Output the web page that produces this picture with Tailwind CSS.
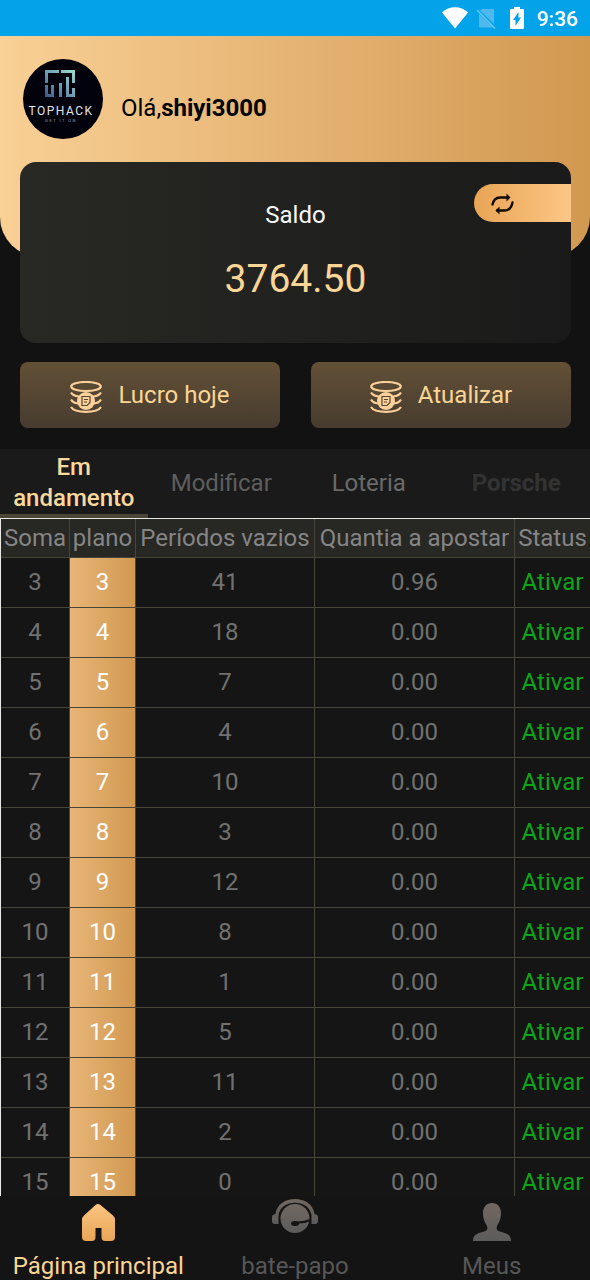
<!DOCTYPE html>
<html lang="pt">
<head>
<meta charset="utf-8">
<meta name="viewport" content="width=device-width, initial-scale=1">
<title>Página principal</title>
<script src="https://cdn.jsdelivr.net/npm/@tailwindcss/browser@4"></script>
</head>
<body class="flex h-screen flex-col overflow-hidden bg-[#121212] font-[Roboto,sans-serif] text-2xl text-[#717171]">

<!-- Status bar -->
<div class="flex h-9 shrink-0 items-center justify-end bg-[#03a3ea] pt-px pr-3 text-[21px] font-medium text-white">
  <svg class="mr-1.5 h-6 w-7" viewBox="0 0 28 24" fill="#fff"><path d="M1 5.500C8-1.500 20-1.500 27 5.500L14 21.500z"/></svg>
  <svg class="mr-1.5 h-6 w-6" viewBox="0 0 24 24" fill="#4fb9ee"><path d="M7.500 2H18q1 0 1 1v14L5 3.500zM4 7l14 13.500H5q-1 0-1-1z"/><path d="M2 3 20 21.500" stroke="#6cc6f0" stroke-width="1.500"/></svg>
  <svg class="mr-2 h-6 w-6" viewBox="0 0 24 24"><path d="M9 0h6v2h3q1 0 1 1v18q0 1-1 1H6q-1 0-1-1V3q0-1 1-1h3z" fill="#fff"/><path d="M13.500 5v5.500H16L10.500 19v-6H8z" fill="#03a3ea"/></svg>
  <span>9:36</span>
</div>

<!-- Greeting -->
<header class="h-[221px] shrink-0 rounded-b-[40px] bg-linear-to-r from-[#f9d095] to-[#d19850] px-[22px] pt-[22px] text-black">
  <div class="flex items-center gap-[18px]">
    <svg class="size-[81px]" viewBox="0 0 81 81" role="img" aria-label="Tophack">
      <defs><linearGradient id="logo" x1="0" y1="1" x2="1" y2="0"><stop offset="0" stop-color="#3c5488"/><stop offset=".5" stop-color="#6f9fb4"/><stop offset="1" stop-color="#9be0cc"/></linearGradient></defs>
      <circle cx="41" cy="41" r="40" fill="#02020c"/>
      <path d="M23 25V12h14v3H26v10zM39 12h14v13h-3V15H39zM23 27h3v9h3v-9h3v12h-9zM37 25h3v14h-3zM44 19h3v17h3v-6h3v9h-9z" fill="url(#logo)"/>
      <text x="39" y="57" text-anchor="middle" font-family="Roboto,sans-serif" font-size="12" letter-spacing="1.500" fill="#e2e2ea">TOPHACK</text>
      <text x="39" y="64" text-anchor="middle" font-family="Roboto,sans-serif" font-size="4" letter-spacing="1.500" fill="#9a9aa4">GET IT ON</text>
    </svg>
    <p class="pt-[18px]">Olá,<b class="font-bold">shiyi3000</b></p>
  </div>
</header>

<!-- Balance -->
<section class="relative mr-[19px] ml-5 -mt-[95px] h-[181px] shrink-0 rounded-2xl bg-linear-to-r from-[#282824] to-[#1a1a1a] pt-[37px] text-center">
  <h2 class="leading-8 text-[#f8f8f8]">Saldo</h2>
  <p class="mt-6 text-[39px] leading-12 text-[#fbd595]">3764.50</p>
  <button type="button" aria-label="Trocar" class="absolute top-[22px] right-0 flex h-[38px] w-[97px] items-center rounded-l-full bg-linear-to-r from-[#e9a455] to-[#fcc785] pt-0.5 pl-4">
    <svg class="size-6" viewBox="0 0 24 24" fill="none" stroke="#120b04" stroke-width="2.300"><path d="M2.500 12.500C3.500 8 6 5.500 10 5.500h8M22.500 10.500c-1 5.500-4 8-8 8H7" stroke-linecap="round"/><path d="M16.500 1.500l4 4-4 4zM9.500 14.500l-4 4 4 4z" fill="#120b04" stroke="none"/></svg>
  </button>
</section>

<div class="mt-[19px] mr-[19px] mb-[21px] ml-5 grid shrink-0 grid-cols-2 gap-[31px] text-[#fbd595]">
  <button type="button" class="flex h-[66px] items-center justify-center gap-4 rounded-lg bg-linear-to-b from-[#635036] to-[#473c2f]">
    <svg class="mt-1 size-8" viewBox="0 0 32 32" fill="none" stroke="#fbd09a" stroke-width="2.200"><ellipse cx="16" cy="5.500" rx="14.800" ry="4.500"/><path d="M1 11.500q2 3.500 8 4M31 11.500q-2 3.500-8 4M1 18.500q2 3.500 7 4M31 18.500q-2 3.500-7 4M1 26C5 32.500 27 32.500 31 26"/><circle cx="16" cy="20" r="9" fill="#fbd09a" stroke="none"/><path d="M12 15.500h8v6l-3 3h-5zM14 18.500h4M14 21h3" stroke="#54452f" stroke-width="1.200"/></svg>
    <span>Lucro hoje</span>
  </button>
  <button type="button" class="flex h-[66px] items-center justify-center gap-4 rounded-lg bg-linear-to-b from-[#635036] to-[#473c2f]">
    <svg class="mt-1 size-8" viewBox="0 0 32 32" fill="none" stroke="#fbd09a" stroke-width="2.200"><ellipse cx="16" cy="5.500" rx="14.800" ry="4.500"/><path d="M1 11.500q2 3.500 8 4M31 11.500q-2 3.500-8 4M1 18.500q2 3.500 7 4M31 18.500q-2 3.500-7 4M1 26C5 32.500 27 32.500 31 26"/><circle cx="16" cy="20" r="9" fill="#fbd09a" stroke="none"/><path d="M12 15.500h8v6l-3 3h-5zM14 18.500h4M14 21h3" stroke="#54452f" stroke-width="1.200"/></svg>
    <span>Atualizar</span>
  </button>
</div>

<!-- Tabs -->
<div role="tablist" class="grid shrink-0 grid-cols-4 bg-[#1a1a1a] leading-[31px]">
  <button type="button" role="tab" aria-selected="true" class="border-b-4 border-[#4b4536] pt-[3px] font-medium text-[#fbd99c]">Em andamento</button>
  <button type="button" role="tab" class="border-b-4 border-transparent pt-[3px] text-[#5e5e5e]">Modificar</button>
  <button type="button" role="tab" class="border-b-4 border-transparent pt-[3px] text-[#6a6a6a]">Loteria</button>
  <button type="button" role="tab" class="border-b-4 border-transparent pt-[3px] font-bold text-[#333]">Porsche</button>
</div>

<!-- Plan table -->
<main class="min-h-0 flex-1 overflow-hidden bg-[#151515]">
  <table class="w-full border-separate border-spacing-0 border-t border-l border-[#e8e8e8] text-center whitespace-nowrap">
    <thead>
      <tr class="h-[39px] bg-[#272724] text-[#858585] *:border-r *:border-b *:border-[#48453a] *:px-[2px] *:font-normal *:last:border-r-0">
        <th scope="col" class="w-[69px]">Soma</th><th scope="col" class="w-[66px]">plano</th><th scope="col" class="w-[179px]">Períodos vazios</th><th scope="col" class="w-[200px]">Quantia a apostar</th><th scope="col">Status</th>
      </tr>
    </thead>
    <tbody id="rows"></tbody>
  </table>
</main>

<!-- Bottom navigation -->
<nav class="grid h-[84px] shrink-0 grid-cols-3 overflow-hidden bg-[#141414] text-[#575757]">
  <a href="#" class="flex flex-col items-center pt-1 text-[#fbd595]">
    <svg class="size-12" viewBox="0 0 48 48"><defs><linearGradient id="gold" x2="0" y2="1"><stop stop-color="#fbc581"/><stop offset="1" stop-color="#e8a558"/></linearGradient></defs><path d="M21.500 5q2.500-2 5 0l12.500 10.500q2 1.800 2 4.500v17q0 4-4 4h-6q-3.500 0-3.500-4v-9h-6v9q0 4-3.500 4h-6q-4 0-4-4V20q0-2.700 2-4.500z" fill="url(#gold)"/></svg>
    <span class="mt-0.5 leading-8">Página principal</span>
  </a>
  <a href="#" class="flex flex-col items-center pt-1">
    <svg class="-mt-1 mb-1 size-12" viewBox="0 0 48 48"><defs><linearGradient id="grey" x2="0" y2="1"><stop stop-color="#706760"/><stop offset="1" stop-color="#5c5c5c"/></linearGradient></defs><path d="M4.500 18C7-2 41-2 43.500 18q3.500.5 3.500 3v4q0 3-3 3h-3.500V19C38 2.500 10 2.500 7.500 19v9H4q-3 0-3-3v-4q0-2.500 3.500-3z" fill="url(#grey)"/><circle cx="24" cy="22.500" r="14.500" fill="url(#grey)"/><path d="M39.500 24q-7 3-14 2.500" fill="none" stroke="#141414" stroke-width="2"/><ellipse cx="24" cy="27.500" rx="4" ry="2.500" fill="#141414"/></svg>
    <span class="mt-0.5 leading-8">bate-papo</span>
  </a>
  <a href="#" class="flex flex-col items-center pt-1">
    <svg class="size-12" viewBox="0 0 48 48" fill="url(#grey)"><path d="M24 3c5.500 0 9 4 9 10 0 7-2.500 10-4 13-1 3 0 4.500 3 5.500 6 2 11 2.500 11 9.500H5c0-7 5-7.500 11-9.500 3-1 4-2.500 3-5.500-1.500-3-4-6-4-13 0-6 3.500-10 9-10z"/></svg>
    <span class="mt-0.5 leading-8">Meus</span>
  </a>
</nav>

<template id="row">
  <tr class="h-[50px] *:border-r *:border-b *:border-[#48453a] *:px-[2px] *:pb-0.5 *:last:border-r-0">
    <td></td>
    <td class="bg-linear-to-r from-[#e8b678] to-[#d19850] bg-origin-border text-white"></td>
    <td></td>
    <td></td>
    <td class="text-[#0da41c]"></td>
  </tr>
</template>
<script>
  const emptyPeriods = [41, 18, 7, 4, 10, 3, 12, 8, 1, 5, 11, 2, 0];
  const row = document.getElementById('row');
  const body = document.getElementById('rows');
  emptyPeriods.forEach((count, i) => {
    const tr = row.content.cloneNode(true);
    const values = [i + 3, i + 3, count, i === 0 ? '0.96' : '0.00', 'Ativar'];
    tr.querySelectorAll('td').forEach((td, k) => { td.textContent = values[k]; });
    body.append(tr);
  });
</script>
</body>
</html>
